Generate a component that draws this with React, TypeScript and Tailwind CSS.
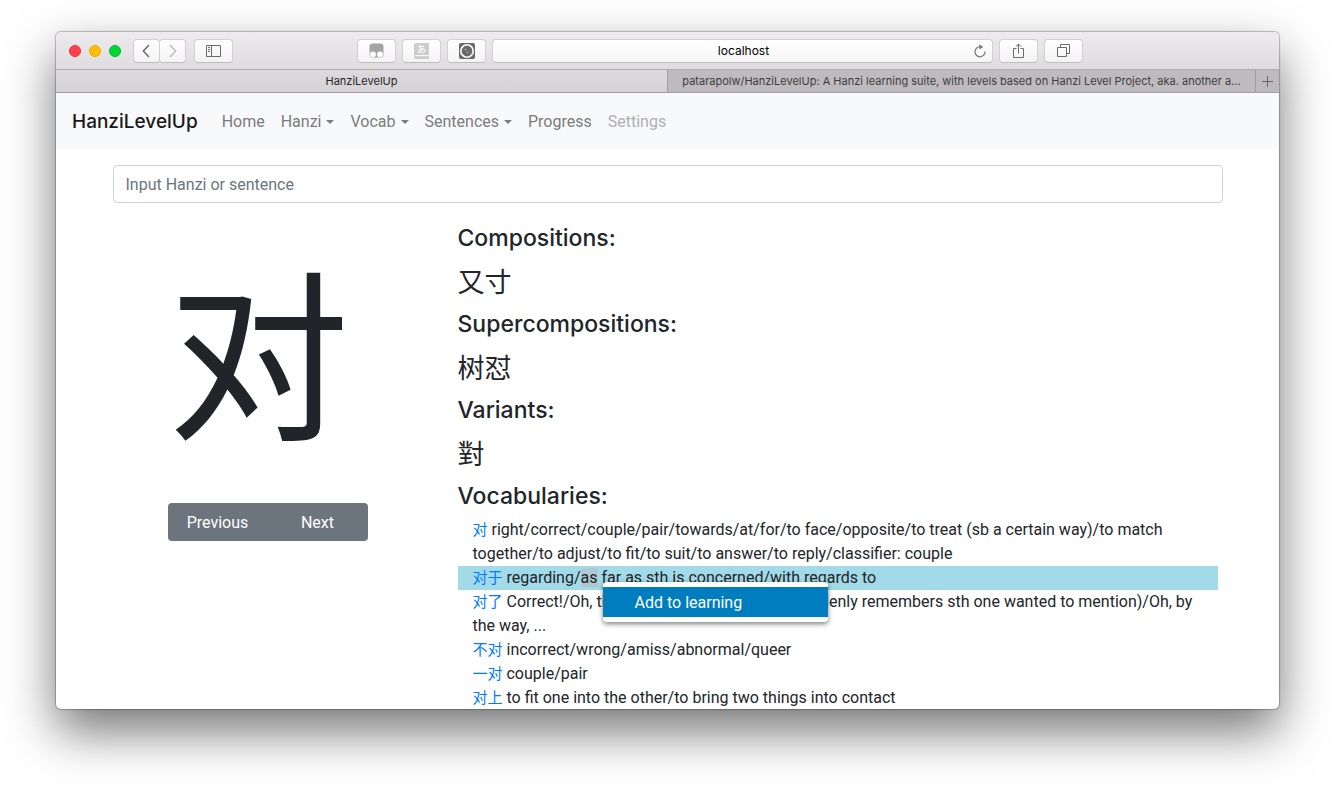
import { type ReactNode } from "react";

const toolButton =
  "flex h-6 w-[39px] items-center justify-center rounded border border-[#d2d0d2] border-b-[#bdbbbd] bg-linear-to-b from-white to-[#f4f3f4] text-[#6b6b6b]";

const heading = "mb-2 font-['Inter',sans-serif] text-[23px] leading-7 font-medium";

function ToolButton({ label, children }: { label: string; children: ReactNode }) {
  return (
    <button type="button" aria-label={label} className={toolButton}>
      {children}
    </button>
  );
}

function Toolbar() {
  return (
    <div className="flex h-[38px] shrink-0 items-center border-b border-[#aeacae] bg-linear-to-b from-[#edebed] to-[#dedcde] px-[13px]">
      <div className="flex gap-2">
        <button type="button" aria-label="Close" className="size-3 rounded-full border border-[#e8333c] bg-[#ff4048]" />
        <button type="button" aria-label="Minimize" className="size-3 rounded-full border border-[#eba800] bg-[#ffbd00]" />
        <button type="button" aria-label="Zoom" className="size-3 rounded-full border border-[#00b824] bg-[#00d72e]" />
      </div>
      <div className="ml-3 flex">
        <button
          type="button"
          aria-label="Back"
          className="flex h-6 w-[27px] items-center justify-center rounded border border-[#d2d0d2] border-b-[#bdbbbd] bg-linear-to-b from-white to-[#f4f3f4] pr-0.5"
        >
          <svg width="8" height="14" viewBox="0 0 8 14" fill="none" stroke="#666" strokeWidth="1.4">
            <path d="M7 1 1.3 7 7 13" />
          </svg>
        </button>
        <button
          type="button"
          aria-label="Forward"
          className="-ml-px flex h-6 w-[27px] items-center justify-center rounded border border-[#d2d0d2] border-b-[#bdbbbd] bg-linear-to-b from-white to-[#f4f3f4]"
        >
          <svg width="8" height="14" viewBox="0 0 8 14" fill="none" stroke="#bbb" strokeWidth="1.4">
            <path d="M1 1 6.7 7 1 13" />
          </svg>
        </button>
      </div>
      <div className="ml-2 flex">
        <ToolButton label="Show sidebar">
          <svg width="15" height="12" viewBox="0 0 15 12" fill="none" stroke="currentColor">
            <path d="M.5.5h14v11H.5zM5.5.5v11M2 2.5h2M2 4.5h2M2 6.5h2" />
          </svg>
        </ToolButton>
      </div>
      <div className="mr-[183px] ml-[124px] flex flex-1 items-center gap-1.5">
        <ToolButton label="Script manager">
          <svg width="15" height="15" viewBox="0 0 15 15">
            <rect x=".5" y=".5" width="14" height="14" rx="3" fill="#a5a5a5" />
            <circle cx="4" cy="11.3" r="2.9" fill="#fff" />
            <circle cx="11" cy="11.3" r="2.9" fill="#fff" />
          </svg>
        </ToolButton>
        <ToolButton label="Dictionary">
          <svg width="15" height="16" viewBox="0 0 15 16">
            <path d="M2 0h13v12H2.5v1H15v3H2a2 2 0 0 1-2-2V2a2 2 0 0 1 2-2z" fill="#cdcdcd" />
            <path d="M1 12.7h13" stroke="#f5f5f5" />
            <path
              d="M4 3.6h6M6.4 1.8c-.2 3 0 5 .8 7.6M9.3 4.8C8.6 8 6.7 9.8 5 9.6 3.3 9.3 4.2 6.5 7.5 6c3-.4 4.3 1 3.5 2.5-.5.9-1.4 1.3-2.4 1.4"
              fill="none"
              stroke="#fff"
            />
          </svg>
        </ToolButton>
        <ToolButton label="Content blocker">
          <svg width="16" height="16" viewBox="0 0 16 16">
            <rect width="16" height="16" rx="2" fill="#6a6a6a" />
            <circle cx="8" cy="8" r="6.2" fill="#6a6a6a" stroke="#fff" strokeWidth="1.6" />
            <circle cx="6.5" cy="6.5" r=".6" fill="#fff" />
            <circle cx="8.7" cy="9" r=".6" fill="#fff" />
          </svg>
        </ToolButton>
        <div className="flex h-6 flex-1 items-center rounded border border-[#d2d0d2] border-b-[#bdbbbd] bg-linear-to-b from-white to-[#f6f5f6] px-[5px]">
          <input
            aria-label="Address"
            defaultValue="localhost"
            className="ml-4 min-w-0 flex-1 bg-transparent text-center font-['Inter',sans-serif] text-[12px] leading-4 text-black outline-none"
          />
          <button type="button" aria-label="Reload" className="text-[#777]">
            <svg width="14" height="14" viewBox="0 0 14 14" fill="none" stroke="currentColor" strokeWidth="1.2">
              <path d="M7.5 2.8A5 5 0 1 0 12 7.5" />
              <path d="M6.3.2 10.3 2.9 6.3 5.5z" fill="currentColor" stroke="none" />
            </svg>
          </button>
        </div>
        <ToolButton label="Share">
          <svg width="13" height="16" viewBox="0 0 13 16" fill="none" stroke="currentColor">
            <path d="M4.5 5.5h-3v9h10v-9h-3M6.5 10.5V1M3.8 3.7 6.5 1l2.7 2.7" />
          </svg>
        </ToolButton>
        <ToolButton label="Show all tabs">
          <svg width="13" height="13" viewBox="0 0 13 13" fill="none" stroke="currentColor">
            <path d="M.5 3.5h9v9h-9zM3.5 3.5v-3h9v9h-3" />
          </svg>
        </ToolButton>
      </div>
    </div>
  );
}

function TabBar() {
  return (
    <div className="flex h-[23px] shrink-0 border-b border-[#a09ea0] font-['Inter',sans-serif] text-[11px] leading-[22px]">
      <button type="button" className="min-w-0 grow basis-6 truncate bg-linear-to-b from-[#dcdadc] to-[#d5d3d5] text-[#262626]">
        HanziLevelUp
      </button>
      <button type="button" className="min-w-0 grow basis-0 truncate border-l border-[#a09ea0] bg-[#bdbbbd] text-[#3f3d3f]">
        patarapolw/HanziLevelUp: A Hanzi learning suite, with levels based on Hanzi Level Project, aka. another a...
      </button>
      <button
        type="button"
        aria-label="New tab"
        className="flex w-6 shrink-0 items-center justify-center border-l border-[#a09ea0] bg-[#bdbbbd]"
      >
        <svg width="11" height="11" viewBox="0 0 11 11" stroke="#666">
          <path d="M5.5 0v11M0 5.5h11" />
        </svg>
      </button>
    </div>
  );
}

function Caret() {
  return (
    <svg width="8" height="4" viewBox="0 0 8 4" fill="currentColor">
      <path d="M0 0h8L4 4z" />
    </svg>
  );
}

function NavMenu({ label }: { label: string }) {
  return (
    <button type="button" className="flex items-center gap-[5px]">
      {label}
      <Caret />
    </button>
  );
}

function Navbar() {
  return (
    <nav className="flex h-14 shrink-0 items-center bg-[#f8f9fa] px-4 pt-0.5 text-[#7b7c7d]">
      <a href="#" className="mr-6 font-['Inter',sans-serif] text-[19px] leading-[30px] font-medium text-[#181819]">
        HanziLevelUp
      </a>
      <div className="flex items-center gap-4">
        <a href="#home">Home</a>
        <NavMenu label="Hanzi" />
        <NavMenu label="Vocab" />
        <NavMenu label="Sentences" />
        <a href="#progress">Progress</a>
        <a href="#settings" aria-disabled="true" className="text-[#aeafb0]">
          Settings
        </a>
      </div>
    </nav>
  );
}

function Section({ title, hanzi }: { title: string; hanzi: string }) {
  return (
    <section>
      <h4 className={heading}>{title}</h4>
      <p lang="zh" className="mb-1 text-[27px] leading-[46px]">
        {hanzi}
      </p>
    </section>
  );
}

function Word({ children }: { children: string }) {
  return (
    <a href="#word" lang="zh" className="text-[15px] text-[#007bff]">
      {children}
    </a>
  );
}

function ContextMenu() {
  return (
    <div
      role="menu"
      className="absolute top-4 left-[145px] w-[225px] rounded bg-white py-[5px] shadow-[0_2px_5px_rgba(0,0,0,0.5)]"
    >
      <button type="button" role="menuitem" className="block h-[30px] w-full bg-[#007dbf] pt-0.5 pl-8 text-left text-white">
        Add to learning
      </button>
    </div>
  );
}

function Vocabularies() {
  return (
    <section>
      <h4 className={heading}>Vocabularies:</h4>
      <ul>
        <li className="pr-4 pl-[15px]">
          <Word>对</Word> right/correct/couple/pair/towards/at/for/to face/opposite/to treat (sb a certain way)/to match
          together/to adjust/to fit/to suit/to answer/to reply/classifier: couple
        </li>
        <li className="relative bg-[#a2dae7] pr-4 pl-[15px]">
          <Word>对于</Word> regarding/<span className="bg-[#b1c8d2]">as</span> far as sth is concerned/with regards to
          <ContextMenu />
        </li>
        <li className="pr-4 pl-[15px]">
          <Word>对了</Word> Correct!/Oh, that's right, ... (as when one suddenly remembers sth one wanted to mention)/Oh, by
          the way, ...
        </li>
        <li className="pr-4 pl-[15px]">
          <Word>不对</Word> incorrect/wrong/amiss/abnormal/queer
        </li>
        <li className="pr-4 pl-[15px]">
          <Word>一对</Word> couple/pair
        </li>
        <li className="pr-4 pl-[15px]">
          <Word>对上</Word> to fit one into the other/to bring two things into contact
        </li>
      </ul>
    </section>
  );
}

export default function App() {
  return (
    <div className="flex h-screen flex-col bg-white px-14 pt-8 pb-20 font-['Roboto','Noto_Sans_CJK_SC',sans-serif] text-[16px] leading-6 text-[#212529]">
      <div className="flex min-h-0 flex-1 flex-col overflow-hidden rounded-[5px] bg-white shadow-[0_0_1px_1px_rgba(0,0,0,0.25),0_22px_50px_rgba(0,0,0,0.55)]">
        <Toolbar />
        <TabBar />
        <Navbar />
        <main className="mx-auto w-full max-w-[1140px] px-[15px] pt-4">
          <input
            aria-label="Input Hanzi or sentence"
            placeholder="Input Hanzi or sentence"
            className="block h-[38px] w-full rounded border border-[#ced4da] px-3 text-[#212529] outline-none placeholder:text-[#6c757d]"
          />
          <div className="mt-[21px] mr-[5px] -ml-[35px] grid grid-cols-[1fr_2fr]">
            <div className="flex flex-col items-center">
              <div lang="zh" className="pr-[18px] text-[182px] leading-[279px]">
                对
              </div>
              <div className="flex">
                <button type="button" className="h-[38px] w-[100px] rounded-l bg-[#6c757d] pt-0.5 text-white">
                  Previous
                </button>
                <button type="button" className="h-[38px] w-[100px] rounded-r bg-[#6c757d] pt-0.5 text-white">
                  Next
                </button>
              </div>
            </div>
            <div>
              <Section title="Compositions:" hanzi="又寸" />
              <Section title="Supercompositions:" hanzi="树怼" />
              <Section title="Variants:" hanzi="對" />
              <Vocabularies />
            </div>
          </div>
        </main>
      </div>
    </div>
  );
}
